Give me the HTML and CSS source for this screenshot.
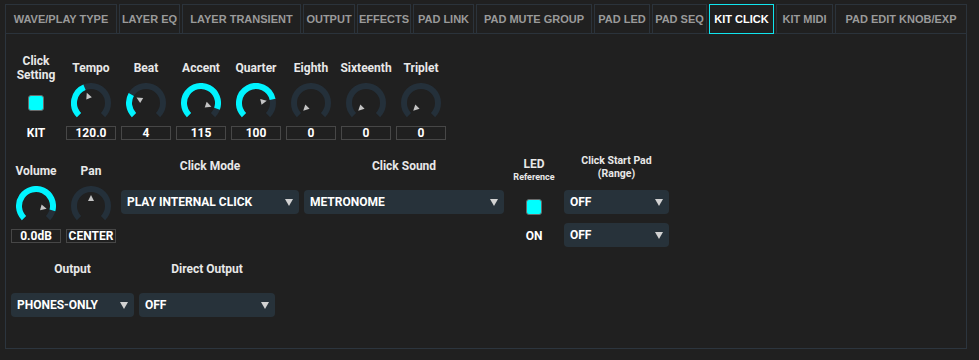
FILE: index.html
```html
<!DOCTYPE html>
<html lang="en">
<head>
  <meta charset="UTF-8" />
  <title>Kit Click</title>
  <link rel="stylesheet" href="styles.css">
</head>
<body>

  <div class="editor">
    <!-- Abas de edição -->
    <div class="tabs">
      <div class="tab">WAVE/PLAY TYPE</div>
      <div class="tab">LAYER EQ</div>
      <div class="tab">LAYER TRANSIENT</div>
      <div class="tab">OUTPUT</div>
      <div class="tab">EFFECTS</div>
      <div class="tab">PAD LINK</div>
      <div class="tab">PAD MUTE GROUP</div>
      <div class="tab">PAD LED</div>
      <div class="tab">PAD SEQ</div>
      <div class="tab active">KIT CLICK</div>
      <div class="tab">KIT MIDI</div>
      <div class="tab">PAD EDIT KNOB/EXP</div>
    </div>

    <div class="panel">
      <!-- Linha 1: click setting + knobs -->
      <div class="row">
        <div class="col">
          <div class="label">Click<br>Setting</div>
          <div class="led-slot"><span class="led"></span></div>
          <div class="caption">KIT</div>
        </div>

        <div class="col">
          <div class="label">Tempo</div>
          <svg class="knob" viewBox="0 0 40 40">
            <path class="track" d="M7.98 32.02 A17 17 0 1 1 32.02 32.02" />
            <path class="fill" d="M7.98 32.02 A17 17 0 0 1 13.49 4.29" />
            <polygon class="pointer" points="20,9 17,15 23,15" transform="rotate(-22.5 20 20)" />
          </svg>
          <div class="value">120.0</div>
        </div>

        <div class="col">
          <div class="label">Beat</div>
          <svg class="knob" viewBox="0 0 40 40">
            <path class="track" d="M7.98 32.02 A17 17 0 1 1 32.02 32.02" />
            <path class="fill" d="M7.98 32.02 A17 17 0 0 1 5.28 11.5" />
            <polygon class="pointer" points="20,9 17,15 23,15" transform="rotate(-60 20 20)" />
          </svg>
          <div class="value">4</div>
        </div>

        <div class="col">
          <div class="label">Accent</div>
          <svg class="knob" viewBox="0 0 40 40">
            <path class="track" d="M7.98 32.02 A17 17 0 1 1 32.02 32.02" />
            <path class="fill" d="M7.98 32.02 A17 17 0 1 1 36.02 25.67" />
            <polygon class="pointer" points="20,9 17,15 23,15" transform="rotate(109.5 20 20)" />
          </svg>
          <div class="value">115</div>
        </div>

        <div class="col">
          <div class="label">Quarter</div>
          <svg class="knob" viewBox="0 0 40 40">
            <path class="track" d="M7.98 32.02 A17 17 0 1 1 32.02 32.02" />
            <path class="fill" d="M7.98 32.02 A17 17 0 1 1 36.6 16.35" />
            <polygon class="pointer" points="20,9 17,15 23,15" transform="rotate(77.6 20 20)" />
          </svg>
          <div class="value">100</div>
        </div>

        <div class="col">
          <div class="label">Eighth</div>
          <svg class="knob" viewBox="0 0 40 40">
            <path class="track" d="M7.98 32.02 A17 17 0 1 1 32.02 32.02" />
            <polygon class="pointer" points="20,9 17,15 23,15" transform="rotate(-135 20 20)" />
          </svg>
          <div class="value">0</div>
        </div>

        <div class="col">
          <div class="label">Sixteenth</div>
          <svg class="knob" viewBox="0 0 40 40">
            <path class="track" d="M7.98 32.02 A17 17 0 1 1 32.02 32.02" />
            <polygon class="pointer" points="20,9 17,15 23,15" transform="rotate(-135 20 20)" />
          </svg>
          <div class="value">0</div>
        </div>

        <div class="col">
          <div class="label">Triplet</div>
          <svg class="knob" viewBox="0 0 40 40">
            <path class="track" d="M7.98 32.02 A17 17 0 1 1 32.02 32.02" />
            <polygon class="pointer" points="20,9 17,15 23,15" transform="rotate(-135 20 20)" />
          </svg>
          <div class="value">0</div>
        </div>
      </div>

      <!-- Linha 2: volume, pan, modos -->
      <div class="row row-2">
        <div class="col">
          <div class="label">Volume</div>
          <svg class="knob" viewBox="0 0 40 40">
            <path class="track" d="M7.98 32.02 A17 17 0 1 1 32.02 32.02" />
            <path class="fill" d="M7.98 32.02 A17 17 0 1 1 36.42 24.4" />
            <polygon class="pointer" points="20,9 17,15 23,15" transform="rotate(105 20 20)" />
          </svg>
          <div class="value">0.0dB</div>
        </div>

        <div class="col">
          <div class="label">Pan</div>
          <svg class="knob" viewBox="0 0 40 40">
            <path class="track" d="M7.98 32.02 A17 17 0 1 1 32.02 32.02" />
            <polygon class="pointer" points="20,9 17,15 23,15" />
          </svg>
          <div class="value">CENTER</div>
        </div>

        <div class="field w-mode">
          <div class="field-label">Click Mode</div>
          <div class="select"><span>PLAY INTERNAL CLICK</span><i class="arrow"></i></div>
        </div>

        <div class="field w-sound">
          <div class="field-label">Click Sound</div>
          <div class="select"><span>METRONOME</span><i class="arrow"></i></div>
        </div>

        <div class="col led-col">
          <div class="led-title">LED</div>
          <div class="led-sub">Reference</div>
          <span class="led led-ref"></span>
          <div class="caption on">ON</div>
        </div>

        <div class="field w-pad">
          <div class="field-label tight">Click Start Pad<br>(Range)</div>
          <div class="select"><span>OFF</span><i class="arrow"></i></div>
          <div class="select second"><span>OFF</span><i class="arrow"></i></div>
        </div>
      </div>

      <!-- Linha 3: saídas -->
      <div class="row row-3">
        <div class="field w-out">
          <div class="field-label">Output</div>
          <div class="select"><span>PHONES-ONLY</span><i class="arrow"></i></div>
        </div>
        <div class="field w-direct">
          <div class="field-label">Direct Output</div>
          <div class="select"><span>OFF</span><i class="arrow"></i></div>
        </div>
      </div>
    </div>
  </div>

</body>
</html>
```

FILE: styles.css
```css
body {
  margin: 0;
  background-color: #202020;
  color: #e8e8e8;
  font-family: Roboto, "Liberation Sans", sans-serif;
  font-weight: bold;
}

.editor {
  padding: 4px 12px 0 5px;
}

/* Abas */
.tabs {
  display: grid;
  grid-template-columns: 112px 61px 119px 52px 54px 61px 116px 56px 55px 65px 57px 1fr;
  column-gap: 2px;
  height: 30px;
}

.tab {
  border: 1px solid #2b333b;
  display: flex;
  align-items: center;
  justify-content: center;
  font-family: "Liberation Sans", Arial, sans-serif;
  font-size: 11px;
  color: #9a9a9a;
  white-space: nowrap;
}

.tab.active {
  position: relative;
  z-index: 1;
  border-color: #10e4ee;
  color: #ffffff;
}

.panel {
  margin-top: -1px;
  border: 1px solid #2c353e;
  height: 316px;
  box-sizing: border-box;
  padding: 20px 5px 0 5px;
}

.row {
  display: flex;
  gap: 5px;
  align-items: flex-start;
}

.row-2 { margin-top: 17px; }
.row-3 { margin-top: 13px; }

.col {
  width: 50px;
  display: flex;
  flex-direction: column;
  align-items: center;
}

.label {
  height: 28px;
  display: flex;
  align-items: center;
  justify-content: center;
  text-align: center;
  font-size: 12px;
  line-height: 14px;
  white-space: nowrap;
}

.knob {
  width: 40px;
  height: 40px;
  margin-top: 1px;
}

.knob .track,
.knob .fill {
  fill: none;
  stroke-width: 6;
}

.knob .track { stroke: #24303a; }
.knob .fill { stroke: #00f4ff; }
.knob .pointer { fill: #c4c4c4; }

.value {
  margin-top: 3px;
  width: 50px;
  height: 14px;
  box-sizing: border-box;
  border: 1px solid #474747;
  color: #ffffff;
  font-size: 12px;
  line-height: 12px;
  text-align: center;
}

.led-slot {
  height: 42px;
  display: flex;
  align-items: center;
  justify-content: center;
}

.led {
  display: block;
  width: 16px;
  height: 16px;
  box-sizing: border-box;
  border: 1px solid #6a6a6a;
  border-radius: 3px;
  background-color: #00ffff;
}

.caption {
  margin-top: 2px;
  font-size: 12px;
  line-height: 14px;
  color: #ffffff;
}

/* Campos com dropdown */
.field {
  display: flex;
  flex-direction: column;
}

.w-mode { width: 178px; }
.w-sound { width: 200px; }
.w-pad { width: 105px; }
.w-out { width: 123px; }
.w-direct { width: 136px; }

.field-label {
  height: 33px;
  box-sizing: border-box;
  padding-top: 2px;
  text-align: center;
  font-size: 12px;
  line-height: 14px;
  white-space: nowrap;
}

.field-label.tight {
  margin-top: -2px;
  height: 35px;
  padding-top: 0;
  font-size: 10.5px;
  line-height: 12.5px;
}

.select {
  height: 24px;
  border-radius: 4px;
  background-color: #27323a;
  display: flex;
  align-items: center;
  justify-content: space-between;
  padding: 0 6px 0 6px;
  font-size: 12px;
  color: #ffffff;
}

.select.second { margin-top: 9px; }

.arrow {
  width: 0;
  height: 0;
  border-left: 4px solid transparent;
  border-right: 4px solid transparent;
  border-top: 7px solid #d2d2d2;
}

.led-col .led-title {
  font-size: 12px;
  line-height: 14px;
}

.led-col .led-sub {
  font-size: 9px;
  line-height: 12px;
}

.led-ref { margin-top: 16px; }

.caption.on { margin-top: 14px; }
```
